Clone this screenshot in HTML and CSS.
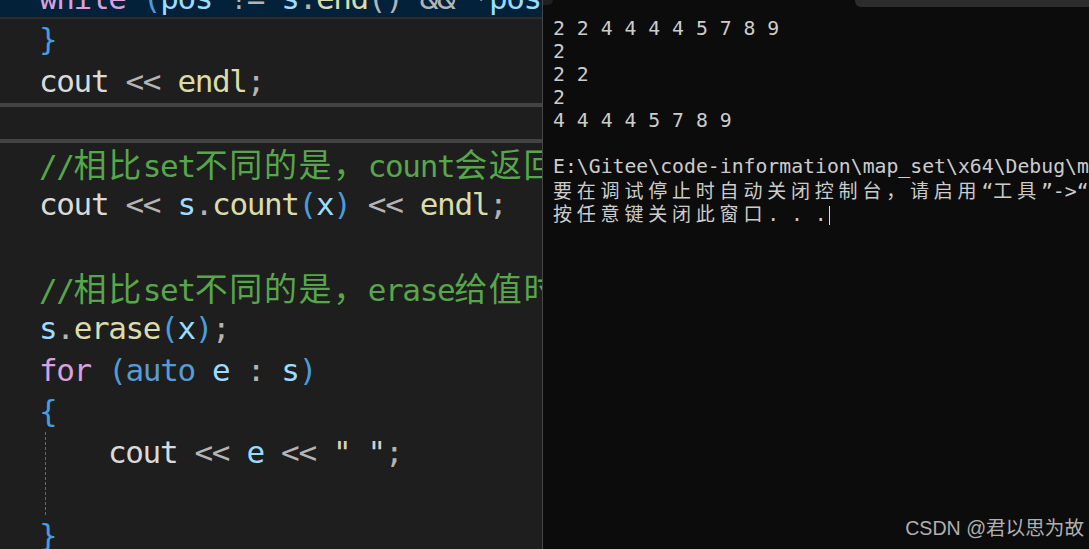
FILE: index.html
```html
<!DOCTYPE html>
<html lang="zh-CN">
<head>
<meta charset="utf-8">
<title>map_set</title>
<link rel="stylesheet" href="styles.css">
</head>
<body>
<div class="screen">
  <div class="editor">
    <div class="code">
      <div class="line current"><span class="c">while</span> <span class="b">(</span><span class="v">pos</span> <span class="o">!=</span> <span class="v">s</span><span class="o">.</span><span class="f">end</span><span class="o">()</span> <span class="o">&amp;&amp;</span> <span class="o">*</span><span class="v">pos</span></div>
      <div class="line"><span class="b">}</span></div>
      <div class="line"><span class="t">cout</span> <span class="o">&lt;&lt;</span> <span class="f">endl</span><span class="o">;</span></div>
      <div class="fold"></div>
      <div class="line cm">//<span class="cjk">相比</span>set<span class="cjk">不同的是，</span>count<span class="cjk">会返回</span></div>
      <div class="line"><span class="t">cout</span> <span class="o">&lt;&lt;</span> <span class="v">s</span><span class="o">.</span><span class="f">count</span><span class="b">(</span><span class="v">x</span><span class="b">)</span> <span class="o">&lt;&lt;</span> <span class="f">endl</span><span class="o">;</span></div>
      <div class="line"></div>
      <div class="line cm">//<span class="cjk">相比</span>set<span class="cjk">不同的是，</span>erase<span class="cjk">给值时</span></div>
      <div class="line"><span class="v">s</span><span class="o">.</span><span class="f">erase</span><span class="b">(</span><span class="v">x</span><span class="b">)</span><span class="o">;</span></div>
      <div class="line"><span class="c">for</span> <span class="b">(</span><span class="k">auto</span> <span class="v">e</span> <span class="o">:</span> <span class="v">s</span><span class="b">)</span></div>
      <div class="line"><span class="b">{</span></div>
      <div class="block">
        <div class="line inner"><span class="t">cout</span> <span class="o">&lt;&lt;</span> <span class="v">e</span> <span class="o">&lt;&lt;</span> <span class="s">" "</span><span class="o">;</span></div>
        <div class="line inner"></div>
      </div>
      <div class="line"><span class="b">}</span></div>
    </div>
  </div>
  <div class="console">
    <div class="titlebits"><span class="tb-left"></span><span class="tb-right"></span></div>
    <div class="out">
      <div class="row">2 2 4 4 4 4 5 7 8 9</div>
      <div class="row">2</div>
      <div class="row">2 2</div>
      <div class="row">2</div>
      <div class="row">4 4 4 4 5 7 8 9</div>
      <div class="row"></div>
      <div class="row">E:\Gitee\code-information\map_set\x64\Debug\m</div>
      <div class="row"><span class="cjk">要在调试停止时自动关闭控制台，请启用</span>“<span class="cjk">工具</span>”-&gt;“</div>
      <div class="row"><span class="cjk">按任意键关闭此窗口</span>. . .<span class="cursor"></span></div>
    </div>
  </div>
  <div class="watermark">CSDN @君以思为故</div>
</div>
</body>
</html>
```
FILE: styles.css
```css
html, body {
  margin: 0;
  padding: 0;
  background: #0c0c0c;
}

.screen {
  position: relative;
  display: flex;
  width: 1089px;
  height: 549px;
  overflow: hidden;
}

/* ---------- editor ---------- */
.editor {
  flex: none;
  width: 542px;
  height: 549px;
  background: #1e1e1e;
  border-right: 1px solid #474747;
  overflow: hidden;
  font-family: "DejaVu Sans Mono", "Noto Sans CJK SC", monospace;
  font-size: 31px;
  letter-spacing: -1.36px;
  color: #dadada;
}

.code {
  margin-top: -22px;
}

.line {
  height: 41.3px;
  line-height: 41.3px;
  padding-left: 39px;
  white-space: pre;
}

.current {
  background: #04213a;
  box-shadow: inset 0 -2px 0 #2c2c2c;
}

.fold {
  height: 40.3px;
  margin-top: 1px;
  box-sizing: border-box;
  border-top: 4px solid #434343;
  border-bottom: 4px solid #434343;
}

.block {
  margin-left: 45px;
  border-left: 1px dashed #6a6a6a;
}

.line.inner {
  padding-left: 62px;
}

.t { color: #dadada; }
.o { color: #b4b4b4; }
.f { color: #dcdcaa; }
.v { color: #9cdcfe; }
.k { color: #569cd6; }
.c { color: #d8a0df; }
.b { color: #4a9ddd; }
.s { color: #d6d0c8; }
.cm { color: #57a64a; }

.editor .cjk {
  font-family: "Noto Sans CJK SC", sans-serif;
  font-size: 33px;
  letter-spacing: 1.6px;
}

/* ---------- console ---------- */
.console {
  flex: 1;
  min-width: 0;
  background: #0c0c0c;
  overflow: hidden;
  font-family: "DejaVu Sans Mono", "Noto Sans CJK SC", monospace;
  font-size: 19.8px;
  color: #cccccc;
}

.titlebits {
  display: flex;
  justify-content: space-between;
  height: 7px;
}

.tb-left {
  width: 10px;
  height: 5px;
  background: #1f1f1f;
  border-bottom-right-radius: 5px;
}

.tb-right {
  width: 234px;
  height: 7px;
  background: #2c2c2c;
  border-bottom-left-radius: 6px;
}

.out {
  padding: 10px 0 0 10px;
}

.row {
  height: 23px;
  line-height: 23px;
  white-space: pre;
}

.console .cjk {
  font-family: "Noto Sans CJK SC", sans-serif;
  font-size: 19px;
  letter-spacing: 4.8px;
}

.cursor {
  display: inline-block;
  width: 1px;
  height: 19px;
  margin-left: 2px;
  background: #dddddd;
  vertical-align: -4px;
}

/* ---------- watermark ---------- */
.watermark {
  position: absolute;
  right: 5px;
  bottom: 8px;
  font-family: "Liberation Sans", "Noto Sans CJK SC", sans-serif;
  font-size: 19.6px;
  color: #b0b0b0;
}
```
